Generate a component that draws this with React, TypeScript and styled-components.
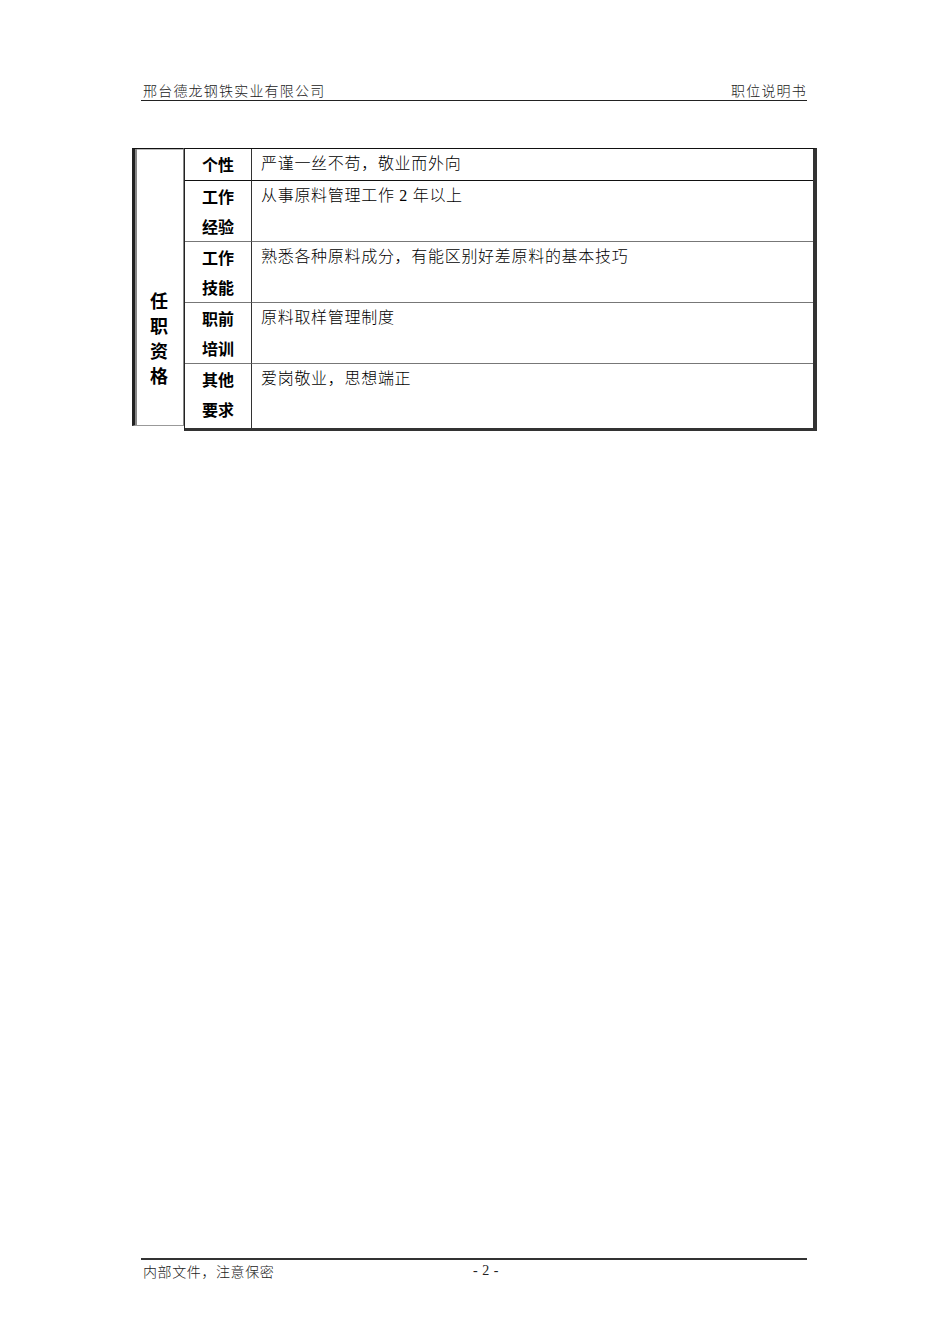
import React from "react";
import styled, { createGlobalStyle } from "styled-components";

const GlobalStyle = createGlobalStyle`
  html, body {
    margin: 0;
    padding: 0;
    background: #fff;
  }
  body {
    font-family: "Liberation Serif", "Noto Sans CJK SC", serif;
    color: #000;
  }
`;

const Page = styled.div`
  width: 950px;
  height: 1344px;
  box-sizing: border-box;
  padding: 81px 0 64px;
  display: flex;
  flex-direction: column;
  background: #fff;
`;

const Header = styled.div`
  margin: 0 143px 0 141px;
  padding: 0 0 2px 2px;
  height: 17px;
  display: flex;
  justify-content: space-between;
  align-items: center;
  border-bottom: 1.5px solid #222;
  font-family: "Noto Sans CJK SC", sans-serif;
  font-weight: 300;
  font-size: 14px;
  letter-spacing: 1.2px;
  color: #222;
`;

const Table = styled.div`
  margin: 47px 0 0 132px;
  display: flex;
  align-items: flex-start;
`;

const SideCell = styled.div`
  width: 48px;
  border-left: 3px solid #222;
  border-top: 1px solid #111;
  border-bottom: 1px solid #999;
  border-right: 1px solid #888;
  box-shadow: inset 2px 0 0 #888, inset 0 1px 0 #bbb;
  padding-top: 139px;
  box-sizing: content-box;
  display: flex;
  flex-direction: column;
  align-items: center;
  font-family: "Noto Sans CJK SC", sans-serif;
  font-weight: 700;
  font-size: 18px;
  line-height: 25px;
  height: 137px;
`;

const Inner = styled.div`
  width: 628px;
  border-top: 1px solid #111;
  border-left: 1px solid #222;
  border-right: 4px solid #333;
  border-bottom: 3px solid #333;
  display: grid;
  grid-template-columns: 67px 1fr;
`;

const Label = styled.div<{ h: number; first?: boolean; dark?: boolean }>`
  height: ${(p) => p.h}px;
  border-right: 1px solid #333;
  border-top: ${(p) => (p.first ? "none" : `1px solid ${p.dark ? "#111" : "#777"}`)};
  display: flex;
  flex-direction: column;
  align-items: center;
  justify-content: flex-start;
  font-family: "Noto Sans CJK SC", sans-serif;
  font-weight: 700;
  font-size: 16px;
  line-height: 30px;
`;

const Content = styled.div<{ h: number; first?: boolean; dark?: boolean }>`
  height: ${(p) => p.h}px;
  border-top: ${(p) => (p.first ? "none" : `1px solid ${p.dark ? "#111" : "#777"}`)};
  padding-left: 9px;
  display: flex;
  align-items: flex-start;
  font-family: "Liberation Serif", "Noto Sans CJK SC", serif;
  font-weight: 300;
  font-size: 16px;
  letter-spacing: 0.7px;
  line-height: 30px;
`;

const Footer = styled.div`
  margin: auto 143px 0 141px;
  border-top: 2px solid #333;
  padding: 2px 0 0 2px;
  display: grid;
  grid-template-columns: 330px auto;
  font-family: "Noto Sans CJK SC", sans-serif;
  font-weight: 300;
  font-size: 14px;
  line-height: 18px;
  letter-spacing: 0.6px;
  color: #222;
`;

const PageNo = styled.span`
  font-family: "Liberation Serif", serif;
  font-size: 14px;
  letter-spacing: 0.5px;
`;

type Row = { label: string[]; text: string; h: number };

const rows: Row[] = [
  { label: ["个性"], text: "严谨一丝不苟，敬业而外向", h: 31 },
  { label: ["工作", "经验"], text: "从事原料管理工作 2 年以上", h: 60 },
  { label: ["工作", "技能"], text: "熟悉各种原料成分，有能区别好差原料的基本技巧", h: 60 },
  { label: ["职前", "培训"], text: "原料取样管理制度", h: 60 },
  { label: ["其他", "要求"], text: "爱岗敬业，思想端正", h: 64 },
];

export default function App() {
  return (
    <>
      <GlobalStyle />
      <Page>
        <Header>
          <span>邢台德龙钢铁实业有限公司</span>
          <span>职位说明书</span>
        </Header>
        <Table>
          <SideCell>
            {"任职资格".split("").map((c) => (
              <span key={c}>{c}</span>
            ))}
          </SideCell>
          <Inner>
            {rows.map((r, i) => (
              <React.Fragment key={i}>
                <Label h={r.h} first={i === 0} dark={i === 1}>
                  {r.label.map((l) => (
                    <span key={l}>{l}</span>
                  ))}
                </Label>
                <Content h={r.h} first={i === 0} dark={i === 1}>
                  {r.text}
                </Content>
              </React.Fragment>
            ))}
          </Inner>
        </Table>
        <Footer>
          <span>内部文件，注意保密</span>
          <PageNo>- 2 -</PageNo>
        </Footer>
      </Page>
    </>
  );
}
